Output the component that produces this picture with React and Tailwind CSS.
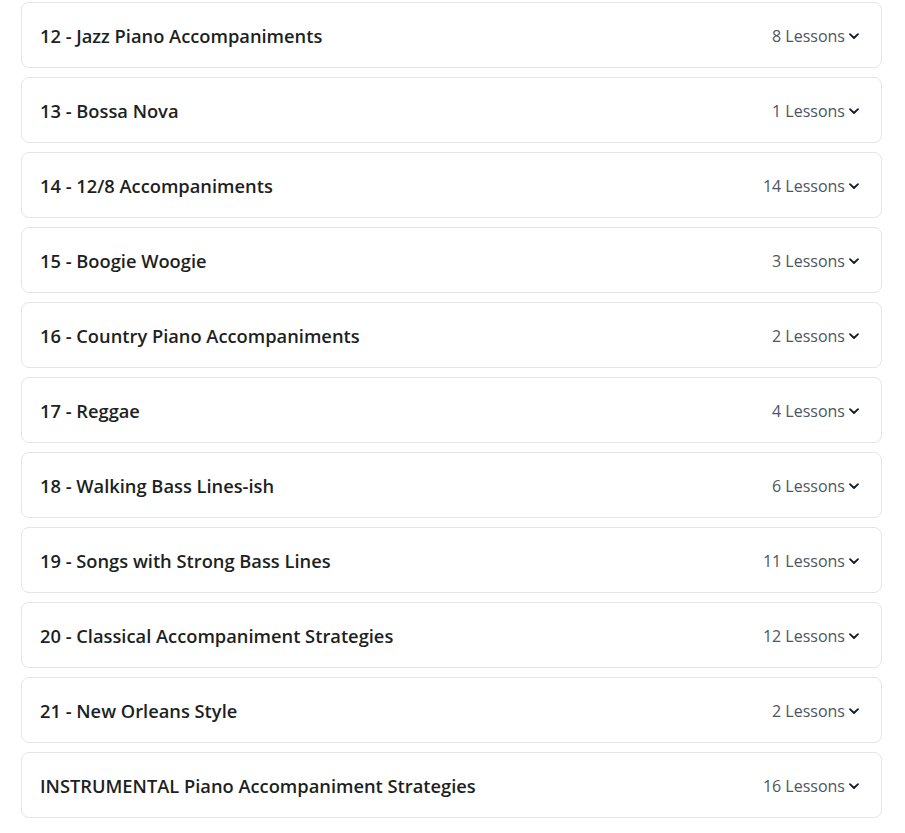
import React from "react";

const modules = [
  { title: "12 - Jazz Piano Accompaniments", lessons: 8 },
  { title: "13 - Bossa Nova", lessons: 1 },
  { title: "14 - 12/8 Accompaniments", lessons: 14 },
  { title: "15 - Boogie Woogie", lessons: 3 },
  { title: "16 - Country Piano Accompaniments", lessons: 2 },
  { title: "17 - Reggae", lessons: 4 },
  { title: "18 - Walking Bass Lines-ish", lessons: 6 },
  { title: "19 - Songs with Strong Bass Lines", lessons: 11 },
  { title: "20 - Classical Accompaniment Strategies", lessons: 12 },
  { title: "21 - New Orleans Style", lessons: 2 },
  { title: "INSTRUMENTAL Piano Accompaniment Strategies", lessons: 16 },
];

const Chevron = () => (
  <svg width="12" height="12" viewBox="0 0 12 12" fill="none" className="ml-[3px] mt-[1px]">
    <path d="M2 4.2l4 3.8 4-3.8" stroke="#111827" strokeWidth="1.8" strokeLinecap="round" strokeLinejoin="round" />
  </svg>
);

const ModuleRow = ({ title, lessons }) => (
  <div className="flex h-[66px] items-center justify-between rounded-lg border border-[#e3e5e8] bg-white pl-[18px] pr-[21px] pt-[1px]">
    <span className="text-[18.3px] font-semibold text-[#1d1f23]">{title}</span>
    <span className="flex items-center text-[16px] text-[#4e5563]">
      {lessons} Lessons
      <Chevron />
    </span>
  </div>
);

export default function App() {
  return (
    <div
      className="min-h-screen bg-white pt-[2px] pl-[21px]"
      style={{ fontFamily: '"Open Sans", sans-serif' }}
    >
      <div className="flex w-[861px] flex-col gap-[9px]">
        {modules.map((m) => (
          <ModuleRow key={m.title} title={m.title} lessons={m.lessons} />
        ))}
      </div>
    </div>
  );
}
